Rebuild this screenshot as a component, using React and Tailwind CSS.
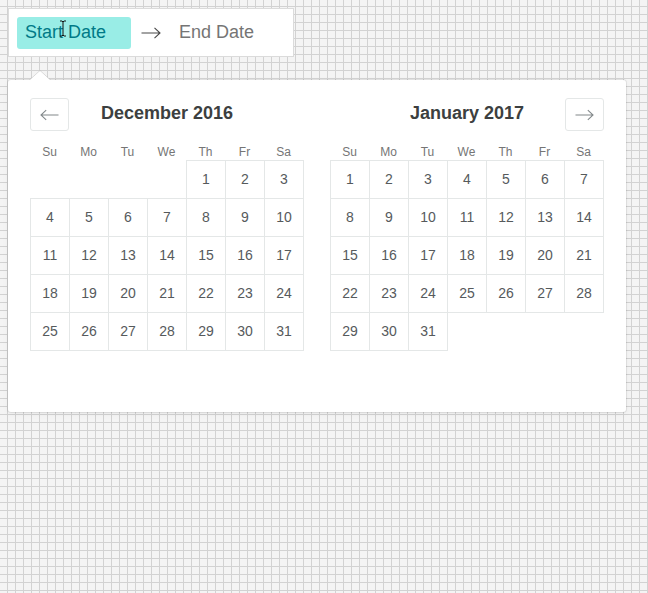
import React from "react";

const weekdays = ["Su", "Mo", "Tu", "We", "Th", "Fr", "Sa"];

const months = [
  { title: "December 2016", start: 4, days: 31, nav: "prev" },
  { title: "January 2017", start: 0, days: 31, nav: "next" },
];

function Arrow({ left, className }) {
  // thin long arrow, like the react-dates ones
  return (
    <svg width="20" height="12" viewBox="0 0 20 12" className={className}>
      {left ? (
        <path d="M19.5 6H1M6.5 0.8L1 6l5.5 5.2" fill="none" stroke="currentColor" strokeWidth="1.1" />
      ) : (
        <path d="M0.5 6H19M13.5 0.8L19 6l-5.5 5.2" fill="none" stroke="currentColor" strokeWidth="1.1" />
      )}
    </svg>
  );
}

function NavButton({ dir }) {
  return (
    <button className="w-[39px] h-[33px] border border-[#e4e7e7] rounded-[3px] bg-white flex items-center justify-center text-[#82888a]">
      <Arrow left={dir === "prev"} className="w-[19px]" />
    </button>
  );
}

function Month({ month }) {
  const cells = [];
  for (let i = 0; i < month.start; i++) cells.push(null);
  for (let d = 1; d <= month.days; d++) cells.push(d);

  return (
    <div className="w-[274px]">
      <div className="grid grid-cols-[39px_1fr_39px] h-[33px] items-center">
        <div>{month.nav === "prev" && <NavButton dir="prev" />}</div>
        <div className="text-center text-[18px] font-bold text-[#3c3f40] leading-none pb-[4px]">{month.title}</div>
        <div>{month.nav === "next" && <NavButton dir="next" />}</div>
      </div>
      <div className="grid grid-cols-[repeat(7,39px)] mt-[13px] h-[16px] items-center">
        {weekdays.map((w) => (
          <div key={w} className="text-center text-[12px] text-[#757575] leading-none">
            {w}
          </div>
        ))}
      </div>
      <div className="grid grid-cols-[repeat(7,39px)] auto-rows-[38px]">
        {cells.map((d, i) =>
          d ? (
            <div
              key={i}
              className="w-[40px] h-[39px] border border-[#e4e7e7] flex items-center justify-center text-[14px] text-[#565a5c]"
            >
              {d}
            </div>
          ) : (
            <div key={i} />
          ),
        )}
      </div>
    </div>
  );
}

export default function App() {
  return (
    <div
      className="min-h-[593px] p-2 bg-[#f4f4f4] bg-[linear-gradient(to_right,transparent_7px,#d2d2d2_7px),linear-gradient(to_bottom,transparent_6px,#d2d2d2_6px,#d2d2d2_7px,transparent_7px)] bg-[length:8px_8px]"
      style={{ fontFamily: '"Liberation Sans", Arial, sans-serif' }}
    >
      {/* date range input */}
      <div className="w-[286px] h-[49px] bg-white border border-[#dbdbdb] flex items-center pl-2">
        <div className="relative w-[114px] h-[32px] bg-[#99ede6] rounded-[3px] flex items-center pl-2 text-[18px] text-[#007a87]">
          Start Date
          <svg width="8" height="17" viewBox="0 0 8 17" className="absolute left-[42px] top-[3px]">
            <path d="M1 1h2l1 1 1-1h2M4 2v13M1 16h2l1-1 1 1h2" fill="none" stroke="#111" strokeWidth="1" />
          </svg>
        </div>
        <Arrow className="ml-[9px] w-[22px] text-[#484848]" />
        <span className="ml-[17px] text-[18px] text-[#757575]">End Date</span>
      </div>

      {/* calendar panel */}
      <div className="relative mt-[23px] w-[618px] bg-white rounded-[3px] shadow-[0_2px_6px_rgba(0,0,0,0.05),0_0_0_1px_rgba(0,0,0,0.07)] pt-[18px] pb-[62px] px-[22px] flex gap-[26px]">
        <svg width="22" height="11" viewBox="0 0 22 11" className="absolute left-[21px] -top-[10px]">
          <path d="M0 10.5L11 0.5l11 10" fill="white" stroke="rgba(0,0,0,0.12)" strokeWidth="1" />
          <rect x="0" y="10" width="22" height="2" fill="white" />
        </svg>
        {months.map((m) => (
          <Month key={m.title} month={m} />
        ))}
      </div>
    </div>
  );
}
